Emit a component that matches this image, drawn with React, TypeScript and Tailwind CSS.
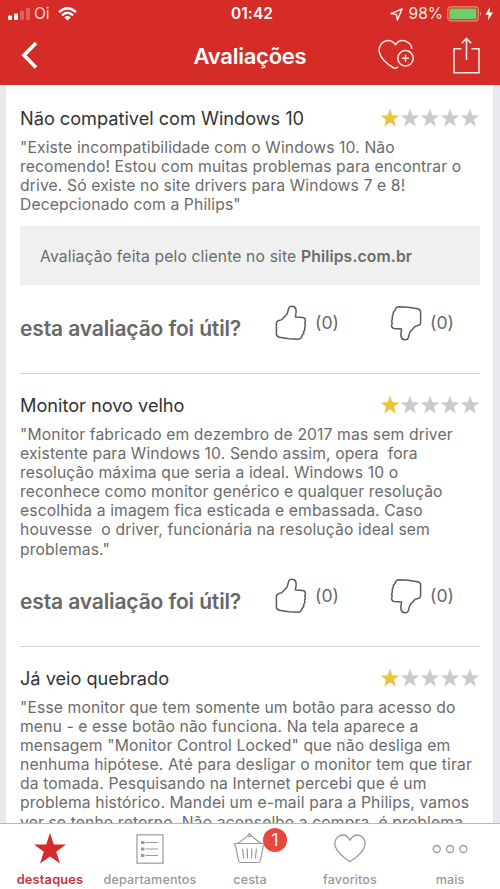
import React from "react";

const STAR = "M10 0.6 12.4 7.2 19.4 7.4 13.9 11.7 15.8 18.4 10 14.5 4.2 18.4 6.1 11.7 0.6 7.4 7.6 7.2Z";

function Stars() {
  return (
    <svg width="100" height="19" viewBox="0 0 100 19" className="mt-px shrink-0">
      {[0, 1, 2, 3, 4].map((i) => (
        <path key={i} d={STAR} transform={`translate(${i * 20} 0)`} fill={i === 0 ? "#ecc53f" : "#cbcbcd"} />
      ))}
    </svg>
  );
}

function Thumb({ down = false }: { down?: boolean }) {
  return (
    <svg
      width="32"
      height="36"
      viewBox="0 0 32 36"
      fill="none"
      stroke="#5b5b5b"
      strokeWidth="1.5"
      strokeLinejoin="round"
      strokeLinecap="round"
      className={down ? "rotate-180" : ""}
    >
      <path d="M1.4 18.2Q1.4 16.4 3.2 15.8L7 14.6 11.4 9.8Q12.6 8.4 13 5.8L13.8 3Q14.6 1 17 1.2 20.4 1.4 21 4.6 21.4 7 20.8 9L20.4 12 27.8 12.6Q30.6 13 30.4 15.6L29.8 18 30.4 19.4 29.6 22.6 29.8 24.4 28.6 27 28.8 28.6 27 30.6 26.2 32.6Q25.4 34.2 23.2 34.2L14 33.8 4.4 32.2Q1.4 31.6 1.4 29Z" />
    </svg>
  );
}

function Useful() {
  return (
    <div className="flex h-9 items-start">
      <span className="mt-[10px] w-[255px] whitespace-nowrap text-[21px] leading-7 font-semibold tracking-[-0.13px] text-[#686868]">
        esta avaliação foi útil?
      </span>
      <Thumb />
      <span className="mt-1.5 ml-2 w-[75px] text-[17.6px] leading-6 text-[#686868]">(0)</span>
      <Thumb down />
      <span className="mt-1.5 ml-2 text-[17.6px] leading-6 text-[#686868]">(0)</span>
    </div>
  );
}

function ReviewHead({ title }: { title: string }) {
  return (
    <div className="flex h-6 items-start justify-between">
      <h2 className="-mt-px text-[18.2px] leading-6 tracking-[-0.02px] whitespace-nowrap text-[#333]">{title}</h2>
      <Stars />
    </div>
  );
}

function Body({ lines }: { lines: string[] }) {
  return (
    <div className="mt-[7px] text-[15.7px] leading-[19.1px] tracking-[0.12px] text-[#6b6b6b]">
      {lines.map((line) => (
        <div key={line} className="whitespace-pre">{line}</div>
      ))}
    </div>
  );
}

function Tab({ label, active = false, children }: { label: string; active?: boolean; children: React.ReactNode }) {
  return (
    <div className="flex w-[100px] flex-col items-center">
      <div className="flex h-12 items-center justify-center pt-px">{children}</div>
      <span
        className={
          active
            ? "text-[12.8px] leading-4 font-semibold tracking-[0.2px] text-[#c9303a]"
            : "text-[12.6px] leading-4 font-medium tracking-[0.1px] text-[#999]"
        }
      >
        {label}
      </span>
    </div>
  );
}

export default function App() {
  return (
    <div className="flex h-[889px] w-[500px] flex-col overflow-hidden bg-white font-['Inter',sans-serif]">
      <header className="h-[85px] shrink-0 bg-[#d52c28] text-white">
        <div className="flex h-7 items-center justify-between pr-1.5 pl-2">
          <div className="flex w-[160px] items-center">
            <svg width="22" height="14" viewBox="0 0 22 14" fill="#fff">
              <rect x="0" y="8.5" width="4" height="4.5" rx="1" />
              <rect x="6" y="6.5" width="4" height="6.5" rx="1" />
              <rect x="12" y="3.5" width="4" height="9.5" rx="1" opacity=".25" />
              <rect x="18" y="1" width="4" height="12" rx="1" opacity=".25" />
            </svg>
            <span className="ml-1 text-[15.5px] leading-5 text-[#ffd9d5]">Oi</span>
            <svg width="19" height="14" viewBox="0 0 19 14" className="ml-2" fill="none" stroke="#fff" strokeWidth="2.3">
              <path d="M1 5.2Q9.5-2.8 18 5.2M4 8.4Q9.5 3.2 15 8.4" />
              <path d="M6.3 10.4Q9.5 7.8 12.7 10.4L9.5 13.6Z" fill="#fff" stroke="none" />
            </svg>
          </div>
          <span className="pl-0.5 text-[15.5px] leading-5 font-semibold tracking-[0.1px]">01:42</span>
          <div className="flex w-[160px] items-center justify-end">
            <svg width="13" height="13" viewBox="0 0 13 13" className="mr-1.5" fill="none" stroke="#ffe5df" strokeWidth="1.5" strokeLinejoin="round">
              <path d="M12 1 1 5.6 6.4 6.6 7.4 12Z" />
            </svg>
            <span className="text-[15.5px] leading-5 text-[#ffe5df]">98%</span>
            <svg width="47" height="16" viewBox="0 0 47 16" className="ml-1">
              <rect x=".8" y=".8" width="30.5" height="14" rx="3" fill="none" stroke="#ef8c78" strokeWidth="1.2" />
              <rect x="2.4" y="2.4" width="27" height="10.8" rx="1.5" fill="#71cd68" />
              <path d="M33 5.3Q35 8 33 10.3Z" fill="#ef8c78" />
              <path d="M43 1 38.4 8.8 41.7 8.8 40.8 14.4 46 6.6 42.5 6.6Z" fill="#fff" />
            </svg>
          </div>
        </div>
        <div className="flex h-[57px] items-center justify-between pr-5 pl-5">
          <div className="-mt-1 w-[102px]">
            <svg width="20" height="30" viewBox="0 0 20 30" fill="none" stroke="#fff" strokeWidth="3.6">
              <path d="M16 3 4 15.3 16 27.6" />
            </svg>
          </div>
          <h1 className="-mt-0.5 text-[22px] leading-7 font-semibold tracking-[-0.25px]">Avaliações</h1>
          <div className="-mt-1 flex w-[102px] items-center justify-between">
            <svg width="36" height="32" viewBox="0 0 36 32" fill="none" stroke="#ffe8e2" strokeWidth="1.5" strokeLinecap="round">
              <path d="M17.5 5.7C14.5 1.5 10.5.7 7 2.2 2.2 4 .4 9 1.4 13.3 3 20 10 25.5 15.8 29Q17.4 30 19.8 28M17.5 5.7C20.5 1.5 25 .8 29 2.8 32 4.3 33.5 6.8 33.8 9.3" />
              <circle cx="27.5" cy="19.3" r="7.7" />
              <path d="M27.5 16.3V22.3M24.5 19.3H30.5" />
            </svg>
            <svg width="32" height="38" viewBox="0 0 32 38" className="-mr-1" fill="none" stroke="#ffe8e2" strokeWidth="1.6">
              <path d="M9.5 12.8H2V36.7H27V12.8H19.5M14.5 24V3M9.8 7.2 14.5 2.5 19.2 7.2" />
            </svg>
          </div>
        </div>
      </header>

      <main className="h-[738px] shrink-0 overflow-hidden border-r-[7px] border-l-[6px] border-[#e9e8ee] bg-white pr-[13px] pl-[14px]">
        <section className="h-[289px] border-b-[1.5px] border-[#d0d0d0] pt-[22px]">
          <ReviewHead title="Não compativel com Windows 10" />
          <Body
            lines={[
              '"Existe incompatibilidade com o Windows 10. Não',
              "recomendo! Estou com muitas problemas para encontrar o",
              "drive. Só existe no site drivers para Windows 7 e 8!",
              'Decepcionado com a Philips"',
            ]}
          />
          <div className="mt-[12px] mb-5 flex h-[59px] items-center bg-[#f0f0f0] pt-[3px] pl-5 text-[15.7px] leading-5 tracking-[0.14px] whitespace-pre text-[#6b6b6b]">
            Avaliação feita pelo cliente no site <b className="font-semibold">Philips.com.br</b>
          </div>
          <Useful />
        </section>
        <section className="h-[273px] border-b-[1.5px] border-[#d0d0d0] pt-5">
          <ReviewHead title="Monitor novo velho" />
          <Body
            lines={[
              '"Monitor fabricado em dezembro de 2017 mas sem driver',
              "existente para Windows 10. Sendo assim, opera  fora",
              "resolução máxima que seria a ideal. Windows 10 o",
              "reconhece como monitor genérico e qualquer resolução",
              "escolhida a imagem fica esticada e embassada. Caso",
              "houvesse  o driver, funcionária na resolução ideal sem",
              'problemas."',
            ]}
          />
          <div className="mt-[19px]">
            <Useful />
          </div>
        </section>
        <section className="pt-5">
          <ReviewHead title="Já veio quebrado" />
          <Body
            lines={[
              '"Esse monitor que tem somente um botão para acesso do',
              "menu - e esse botão não funciona. Na tela aparece a",
              'mensagem "Monitor Control Locked" que não desliga em',
              "nenhuma hipótese. Até para desligar o monitor tem que tirar",
              "da tomada. Pesquisando na Internet percebi que é um",
              "problema histórico. Mandei um e-mail para a Philips, vamos",
              "ver se tenho retorno. Não aconselho a compra, é problema",
            ]}
          />
        </section>
      </main>

      <nav className="flex h-[66px] shrink-0 border-t border-[#b9b9bb] bg-white">
        <Tab label="destaques" active>
          <svg width="32" height="31" viewBox="0 0 32 31" fill="#d72b2b">
            <path d="M16 0 19.8 11.4 32 11.5 22.2 18.8 26 30.5 16 23.4 6 30.5 9.8 18.8 0 11.5 12.2 11.4Z" />
          </svg>
        </Tab>
        <Tab label="departamentos">
          <svg width="28" height="30" viewBox="0 0 28 30" fill="none" stroke="#999" strokeWidth="1.2">
            <rect x="1" y=".8" width="26" height="28.4" />
            <path d="M9.5 8.5H22M9.5 15H22M9.5 21.5H22" />
            <path d="M5 8.5H8.5M5 15H8.5M5 21.5H8.5" strokeWidth="2.8" />
          </svg>
        </Tab>
        <Tab label="cesta">
          <div className="relative">
            <svg width="32" height="32" viewBox="0 0 32 32" fill="none" stroke="#999" strokeWidth="1.2" strokeLinejoin="round">
              <path d="M.8 10.5H30.2V12.5H29.4L26.4 27.5Q26 29.5 24.2 29.5H6.8Q5 29.5 4.6 27.5L1.6 12.5H.8ZM4 10.5 14 2.6M27 10.5 17 2.6M8.5 15.5 9.7 25.5M13.2 15.5 13.5 25.5M17.8 15.5 17.5 25.5M22.5 15.5 21.3 25.5" />
              <circle cx="15.5" cy="2.3" r="1.4" />
            </svg>
            <span className="absolute -top-[5px] left-[29px] flex h-6 w-6 items-center justify-center rounded-full bg-[#e9473d] text-[17px] leading-6 text-white">1</span>
          </div>
        </Tab>
        <Tab label="favoritos">
          <svg width="32" height="29" viewBox="0 0 32 29" fill="none" stroke="#999" strokeWidth="1.3" strokeLinejoin="round">
            <path d="M16 6.3C13.5 1.5 9.5.3 6 1.6 1.7 3.3.2 8 1.2 12.2 2.8 18.5 9.5 23.5 16 27.8 22.5 23.5 29.2 18.5 30.8 12.2 31.8 8 30.3 3.3 26 1.6 22.5.3 18.5 1.5 16 6.3Z" />
          </svg>
        </Tab>
        <Tab label="mais">
          <svg width="36" height="10" viewBox="0 0 36 10" fill="none" stroke="#999" strokeWidth="1.3">
            <circle cx="4.7" cy="5" r="3.5" />
            <circle cx="18" cy="5" r="3.5" />
            <circle cx="31.3" cy="5" r="3.5" />
          </svg>
        </Tab>
      </nav>
    </div>
  );
}
